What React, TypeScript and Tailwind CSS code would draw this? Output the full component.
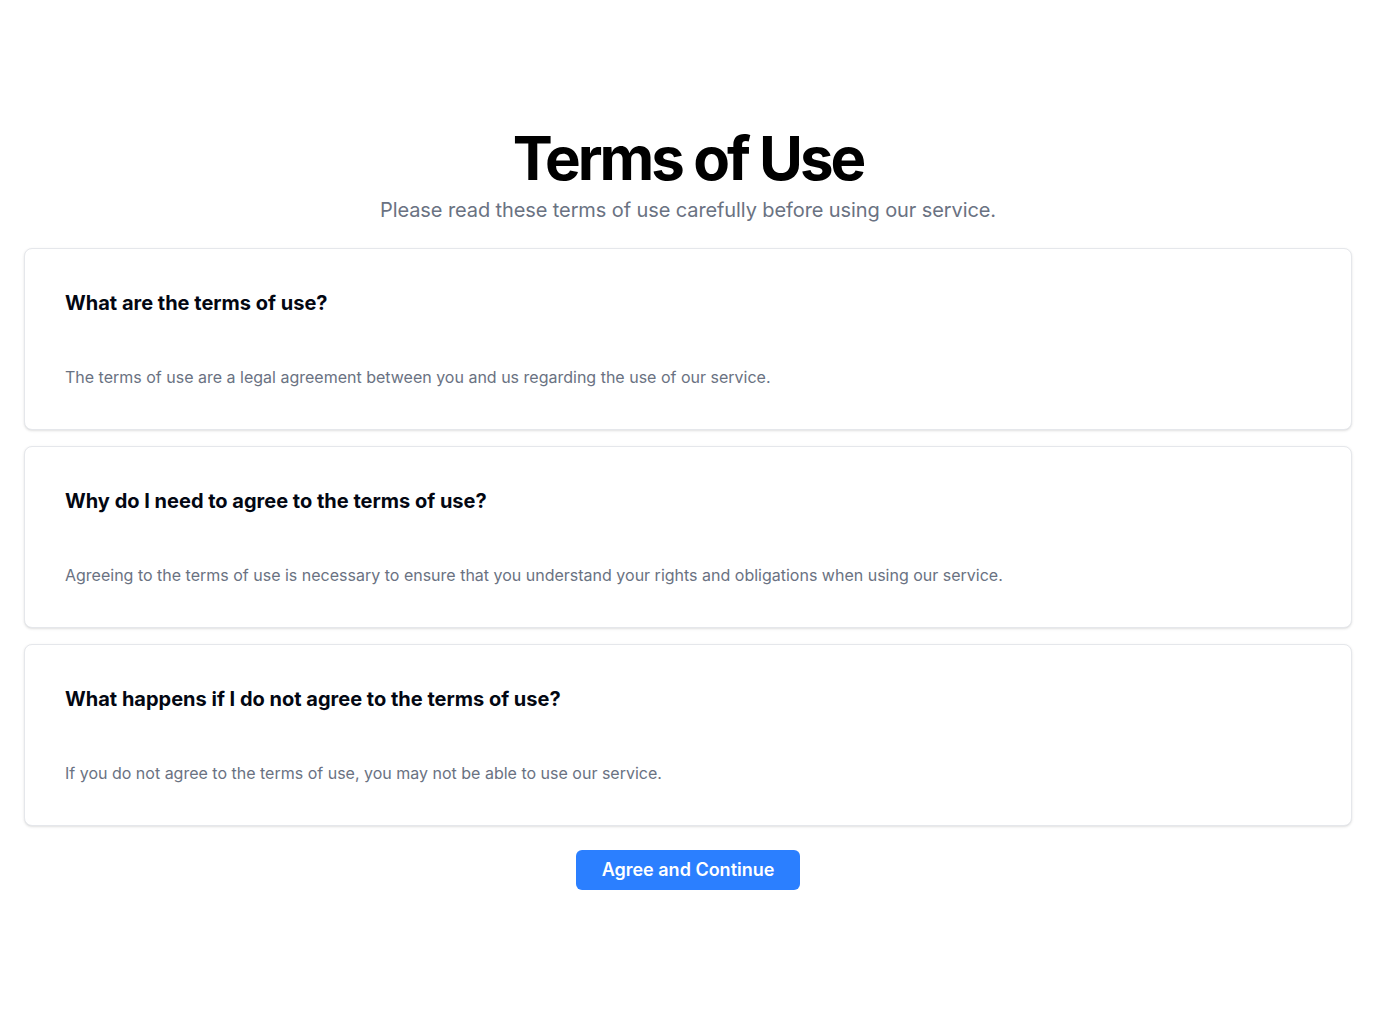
const ITEMS = [
  {
    q: 'What are the terms of use?',
    a: 'The terms of use are a legal agreement between you and us regarding the use of our service.',
  },
  {
    q: 'Why do I need to agree to the terms of use?',
    a: 'Agreeing to the terms of use is necessary to ensure that you understand your rights and obligations when using our service.',
  },
  {
    q: 'What happens if I do not agree to the terms of use?',
    a: 'If you do not agree to the terms of use, you may not be able to use our service.',
  },
]

export default function App() {
  return (
    <div className="min-h-screen bg-white flex items-center justify-center px-6 font-['Inter',sans-serif]">
      <div className="w-full flex flex-col items-center">
        {/* header */}
        <div className="text-center space-y-2">
          <h1 className="text-6xl leading-none font-bold tracking-tighter text-black">Terms of Use</h1>
          <p className="text-xl text-gray-500 tracking-[-0.005em]">Please read these terms of use carefully before using our service.</p>
        </div>

        {/* cards */}
        <div className="w-full mt-6 space-y-4">
          {ITEMS.map((item) => (
            <div key={item.q} className="rounded-lg border border-gray-200 bg-white shadow-sm px-10 pt-10 pb-10">
              <h3 className="text-xl leading-7 font-bold text-gray-950">{item.q}</h3>
              <p className="mt-12 text-base leading-6 text-gray-500">{item.a}</p>
            </div>
          ))}
        </div>

        <button className="mt-6 h-10 px-[26px] rounded-md bg-blue-500 text-white text-lg font-semibold">
          Agree and Continue
        </button>
      </div>
    </div>
  )
}
